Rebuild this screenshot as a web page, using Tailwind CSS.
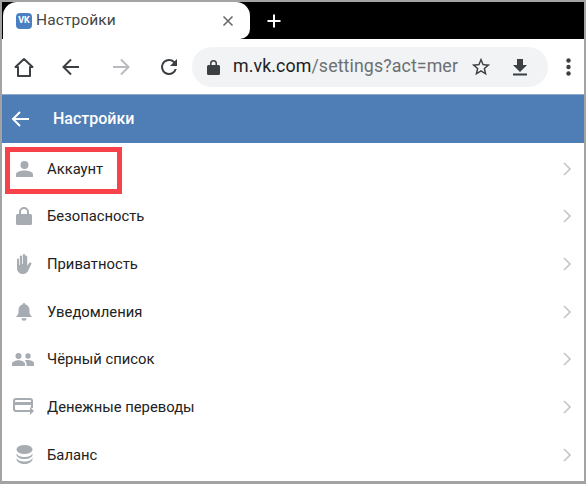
<!DOCTYPE html>
<html><head><meta charset="utf-8"><script src="https://cdn.jsdelivr.net/npm/@tailwindcss/browser@4"></script></head>
<body class="m-0">
<div class="w-[586px] h-[484px] bg-[#a3a3a3] pt-[2px] px-[2px] pb-[3px] overflow-hidden font-['Roboto',sans-serif]">
<div class="w-[582px] h-[479px] bg-white flex flex-col overflow-hidden relative">
  <div class="h-[37px] bg-black flex items-start shrink-0">
    <div class="ml-[1px] w-[247px] h-[37px] bg-white rounded-t-[14px] rounded-br-[10px] flex items-center pl-[13px] pr-[16px]">
      <div class="w-[16px] h-[16px] rounded-[4px] bg-[#4a7fc1] flex items-center justify-center text-white text-[9px] font-bold leading-none">VK</div>
      <span class="ml-[4px] text-[15.5px] text-[#444746] tracking-[0.1px]">Настройки</span>
      <svg class="ml-auto" width="12" height="12" viewBox="0 0 12 12" fill="none" stroke="#6a6a6a" stroke-width="1.6"><path d="M1.5 1.5l9 9M10.5 1.5l-9 9"/></svg>
    </div>
    <svg class="ml-[17px] mt-[12px]" width="14" height="14" viewBox="0 0 14 14" stroke="#fff" stroke-width="2"><path d="M7 0.5v13M0.5 7h13"/></svg>
  </div>
  <div class="h-[55px] bg-white flex items-center shrink-0 relative">
    <svg class="ml-[11px]" width="22" height="22" viewBox="0 0 22 22" fill="none" stroke="#3c4043" stroke-width="2" stroke-linejoin="round"><path d="M11 3 L2.5 11 H5 V20 H17 V11 H19.5 Z"/></svg>
    <svg class="ml-[26px]" width="20" height="20" viewBox="0 0 20 20" fill="none" stroke="#3c4043" stroke-width="2"><path d="M18 10H3M10 2.5L2.5 10l7.5 7.5"/></svg>
    <svg class="ml-[30px]" width="20" height="20" viewBox="0 0 20 20" fill="none" stroke="#b9bbbe" stroke-width="2"><path d="M2 10h15M10 2.5l7.5 7.5L10 17.5"/></svg>
    <svg class="ml-[26px]" width="24" height="24" viewBox="0 0 24 24" fill="#3c4043"><path d="M17.65 6.35A7.96 7.96 0 0 0 12 4a8 8 0 1 0 7.73 10h-2.08A6 6 0 1 1 12 6c1.66 0 3.14.69 4.22 1.78L13 11h7V4l-2.35 2.35z"/></svg>
    <div class="ml-[11px] w-[356px] h-[40px] rounded-full bg-[#f1f3f4] flex items-center pl-[15px]">
      <svg width="13" height="16" viewBox="0 0 13 16" fill="#3c4043"><path d="M3 6V4.500a3.500 3.500 0 0 1 7 0V6h1.500A1.500 1.500 0 0 1 13 7.500v7a1.500 1.500 0 0 1-1.500 1.500h-10A1.500 1.500 0 0 1 0 14.500v-7A1.500 1.500 0 0 1 1.500 6zM4.500 6h4V4.500a2 2 0 0 0-4 0z"/></svg>
      <div class="ml-[13px] w-[225px] whitespace-nowrap text-[17.8px] tracking-[0.1px] text-[#6d7073]"><span class="text-[#202124]">m.vk.com</span>/settings?act=mer</div>
      <svg class="ml-[12px]" width="22" height="22" viewBox="0 0 24 24" fill="#3c4043"><path d="M22 9.240l-7.190-.62L12 2 9.190 8.630 2 9.240l5.460 4.730L5.820 21 12 17.270 18.180 21l-1.630-7.030L22 9.240zM12 15.400l-3.760 2.270 1-4.280-3.320-2.880 4.380-.38L12 6.100l1.710 4.040 4.380.38-3.320 2.880 1 4.280L12 15.400z"/></svg>
      <svg class="ml-[20px]" width="16" height="18" viewBox="0 0 16 18" fill="#3c4043"><path d="M5 1h6v6h4l-7 7-7-7h4zM1 15.500h14V17.500H1z"/></svg>
    </div>
    <svg class="ml-[18px]" width="5" height="18" viewBox="0 0 5 18" fill="#3c4043"><circle cx="2.500" cy="2.500" r="2.200"/><circle cx="2.500" cy="9" r="2.200"/><circle cx="2.500" cy="15.500" r="2.200"/></svg>
  </div>
  <div class="h-[49px] bg-[#4f7db5] border-t border-[#8fa9c7] flex items-center shrink-0">
    <svg class="ml-[9px]" width="18" height="16" viewBox="0 0 18 16" fill="none" stroke="#fff" stroke-width="2"><path d="M18 8H2M9 1L2 8l7 7"/></svg>
    <span class="ml-[24px] text-white text-[16px] font-medium">Настройки</span>
  </div>
  <div class="flex flex-col text-[14.8px] text-[#222222] mt-[2px]">
    <div class="h-[47.67px] flex items-center relative pl-[12px]">
      <div class="w-[20px] flex justify-center"><svg width="17" height="16" viewBox="0 0 17 16" fill="#a7abb2"><circle cx="8.500" cy="4" r="4"/><path d="M0 16v-2.500C0 10.500 5 9.500 8.500 9.500s8.500 1 8.500 4V16z"/></svg></div>
      <span class="ml-[13px]">Аккаунт</span>
      <svg class="ml-auto mr-[13px]" width="8" height="14" viewBox="0 0 8 14" fill="none" stroke="#c4c8cc" stroke-width="1.700"><path d="M1 1l6 6-6 6"/></svg>
      <div class="absolute left-[3px] top-[2px] w-[117px] h-[47px] border-[5px] border-[#f8424a]"></div>
    </div>
    <div class="h-[47.67px] flex items-center pl-[12px]">
      <div class="w-[20px] flex justify-center"><svg width="16" height="18" viewBox="0 0 16 18" fill="#a7abb2"><path d="M3 7V5a5 5 0 0 1 10 0v2h1.500A1.500 1.500 0 0 1 16 8.500v8a1.500 1.500 0 0 1-1.500 1.500h-13A1.500 1.500 0 0 1 0 16.500v-8A1.500 1.500 0 0 1 1.500 7zM5 7h6V5a3 3 0 0 0-6 0z"/></svg></div>
      <span class="ml-[13px]">Безопасность</span>
      <svg class="ml-auto mr-[13px]" width="8" height="14" viewBox="0 0 8 14" fill="none" stroke="#c4c8cc" stroke-width="1.700"><path d="M1 1l6 6-6 6"/></svg>
    </div>
    <div class="h-[47.67px] flex items-center pl-[12px]">
      <div class="w-[20px] flex justify-center"><svg width="16" height="20" viewBox="0 0 16 20" fill="#a7abb2"><path d="M1 5.500a1 1 0 0 1 2 0V11h.8V2.500a1.100 1.100 0 0 1 2.200 0V10h.8V1.200a1.200 1.200 0 0 1 2.400 0V10H9V2.500a1.100 1.100 0 0 1 2.200 0V12l1.500-2.500c.5-.9 1.500-1.200 2.300-.7.5.3.5.8.3 1.300L12.500 16c-1 2.500-2.800 4-5.500 4C3 20 1 17.500 1 14z"/></svg></div>
      <span class="ml-[13px]">Приватность</span>
      <svg class="ml-auto mr-[13px]" width="8" height="14" viewBox="0 0 8 14" fill="none" stroke="#c4c8cc" stroke-width="1.700"><path d="M1 1l6 6-6 6"/></svg>
    </div>
    <div class="h-[47.67px] flex items-center pl-[12px]">
      <div class="w-[20px] flex justify-center"><svg width="16" height="18" viewBox="0 0 16 18" fill="#a7abb2"><path d="M8 0a1.500 1.500 0 0 1 1.500 1.500C12 2.200 13.500 4.500 13.500 7v3.500L16 14H0l2.500-3.500V7c0-2.500 1.500-4.800 4-5.500A1.500 1.500 0 0 1 8 0zM5.500 15.200h5a2.500 2.500 0 0 1-5 0z"/></svg></div>
      <span class="ml-[13px]">Уведомления</span>
      <svg class="ml-auto mr-[13px]" width="8" height="14" viewBox="0 0 8 14" fill="none" stroke="#c4c8cc" stroke-width="1.700"><path d="M1 1l6 6-6 6"/></svg>
    </div>
    <div class="h-[47.67px] flex items-center pl-[10px]">
      <div class="w-[22px] flex justify-center"><svg width="22" height="13" viewBox="0 0 22 13" fill="#a7abb2"><circle cx="6.500" cy="3" r="3"/><circle cx="16" cy="3" r="2.700"/><path d="M0 13v-2C0 8.500 4 7.300 6.500 7.300S13 8.500 13 11v2zM14.500 13v-2c0-1.500-.7-2.700-1.800-3.500 1-.3 2.300-.4 3.300-.4 2.300 0 6 1.100 6 3.500V13z"/></svg></div>
      <span class="ml-[13px]">Чёрный список</span>
      <svg class="ml-auto mr-[13px]" width="8" height="14" viewBox="0 0 8 14" fill="none" stroke="#c4c8cc" stroke-width="1.700"><path d="M1 1l6 6-6 6"/></svg>
    </div>
    <div class="h-[47.67px] flex items-center pl-[10px]">
      <div class="w-[22px] flex justify-center"><svg width="21" height="18" viewBox="0 0 21 18" fill="#a7abb2"><path d="M3 0h14a3 3 0 0 1 3 3v7h-2V7H2v4a1 1 0 0 0 1 1h9v2H3a3 3 0 0 1-3-3V3a3 3 0 0 1 3-3zM2 3v1h16V3a1 1 0 0 0-1-1H3a1 1 0 0 0-1 1zM12 12h5V9l4 4-4 4v-3h-5z"/></svg></div>
      <span class="ml-[13px]">Денежные переводы</span>
      <svg class="ml-auto mr-[13px]" width="8" height="14" viewBox="0 0 8 14" fill="none" stroke="#c4c8cc" stroke-width="1.700"><path d="M1 1l6 6-6 6"/></svg>
    </div>
    <div class="h-[47.67px] flex items-center pl-[12px]">
      <div class="w-[20px] flex justify-center"><svg width="17" height="19" viewBox="0 0 17 19" fill="#a7abb2"><ellipse cx="8.500" cy="4.500" rx="8" ry="4.500"/><path d="M.5 8.500C1.500 11 5 12 8.500 12s7-1 8-3.500v1.500C16 12.500 12.500 14 8.500 14S1 12.500.5 10zM.5 13c1 2.500 4.500 3.500 8 3.500s7-1 8-3.500v1.500C16 17 12.500 19 8.500 19S1 17 .5 14.500z"/></svg></div>
      <span class="ml-[13px]">Баланс</span>
      <svg class="ml-auto mr-[13px]" width="8" height="14" viewBox="0 0 8 14" fill="none" stroke="#c4c8cc" stroke-width="1.700"><path d="M1 1l6 6-6 6"/></svg>
    </div>
  </div>
</div>
</div>
</body></html>
